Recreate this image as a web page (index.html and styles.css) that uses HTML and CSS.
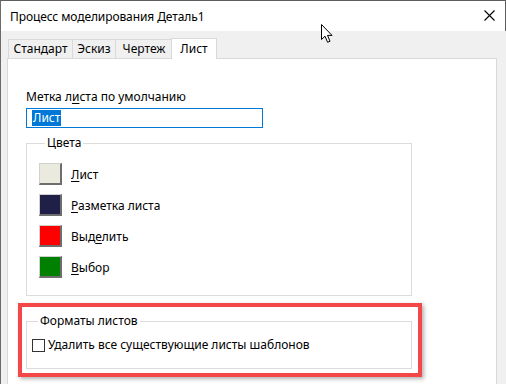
FILE: index.html
```html
<!DOCTYPE html>
<html lang="ru">
<head>
    <meta charset="UTF-8">
    <title>Процесс моделирования Деталь1</title>
    <link rel="stylesheet" href="styles.css">
</head>
<body>
    <div class="window">
        <div class="titlebar">
            <span class="title">Процесс моделирования Деталь1</span>
            <svg class="close" width="11" height="11" viewBox="0 0 11 11">
                <path d="M0.5 0.5 L10.5 10.5 M10.5 0.5 L0.5 10.5" stroke="#000" stroke-width="1.1" fill="none"/>
            </svg>
        </div>
        <div class="client">
            <div class="tabs">
                <div class="tab tab-std">Стандарт</div>
                <div class="tab tab-sketch">Эскиз</div>
                <div class="tab tab-draw">Чертеж</div>
                <div class="tab tab-sheet active">Лист</div>
            </div>
            <div class="panel">
                <label class="field-label" for="sheet-name">Метка л<u>и</u>ста по умолчанию</label>
                <div class="text-input" id="sheet-name"><span class="selection">Лист</span></div>

                <fieldset class="group colors">
                    <legend>Цвета</legend>
                    <div class="color-row">
                        <span class="swatch swatch-sheet"></span>
                        <span><u>Л</u>ист</span>
                    </div>
                    <div class="color-row">
                        <span class="swatch swatch-markup"></span>
                        <span><u>Р</u>азметка листа</span>
                    </div>
                    <div class="color-row">
                        <span class="swatch swatch-highlight"></span>
                        <span>Выд<u>е</u>лить</span>
                    </div>
                    <div class="color-row">
                        <span class="swatch swatch-select"></span>
                        <span><u>В</u>ыбор</span>
                    </div>
                </fieldset>

                <div class="highlight">
                    <fieldset class="group formats">
                        <legend>Форматы листов</legend>
                        <label class="check-row">
                            <input type="checkbox" class="check">
                            <span>Удалить все существующие листы шаблонов</span>
                        </label>
                    </fieldset>
                </div>
            </div>
        </div>
        <svg class="cursor" width="14" height="21" viewBox="0 0 14 21">
            <path d="M0.5 0.5 L0.5 15.5 L4 12.2 L6.6 18.3 L9 17.3 L6.5 11.4 L11 11.4 Z" fill="#fff" stroke="#000" stroke-width="1"/>
        </svg>
    </div>
</body>
</html>
```

FILE: styles.css
```css
/* Общие стили */
body {
    margin: 0;
    padding: 0;
    width: 506px;
    height: 384px;
    overflow: hidden;
    font-family: 'Noto Sans', 'DejaVu Sans', sans-serif;
    font-size: 12px;
    color: #000;
    background: #f0f0f0;
}

/* Окно */
.window {
    position: relative;
    height: 384px;
    border-left: 1px solid #6b6b6b;
    border-top: 1px solid #5e5e5e;
    box-sizing: border-box;
    display: flex;
    flex-direction: column;
}

.titlebar {
    height: 30px;
    background: #fff;
    display: flex;
    align-items: center;
    justify-content: space-between;
    padding: 0 10px 0 9px;
    border-right: 1px solid #5e5e5e;
}

.title {
    letter-spacing: -0.1px;
}

.close {
    margin-top: -1px;
}

/* Клиентская область */
.client {
    flex: 1;
    display: flex;
    flex-direction: column;
    padding: 7px 9px 0 6px;
}

.tabs {
    display: flex;
    align-items: flex-end;
    height: 21px;
    margin-bottom: -1px;
    padding-left: 1px;
    position: relative;
    z-index: 1;
}

.tab {
    height: 19px;
    box-sizing: border-box;
    border: 1px solid #d9d9d9;
    border-bottom: none;
    background: #f0f0f0;
    text-align: center;
    line-height: 18px;
    margin-bottom: 1px;
}

.tab + .tab {
    margin-left: -1px;
}

.tab-std { width: 65px; }
.tab-sketch { width: 44px; }
.tab-draw { width: 58px; }

.tab.active {
    width: 46px;
    height: 21px;
    margin-left: -2px;
    margin-bottom: 0;
    background: #fff;
    line-height: 19px;
}

.panel {
    flex: 1;
    background: #fff;
    border: 1px solid #d9d9d9;
    border-bottom: none;
    padding: 30px 18px 0 18px;
}

/* Поле ввода */
.field-label {
    display: block;
    line-height: 16px;
}

.field-label u,
.color-row u {
    text-underline-offset: 2px;
}

.text-input {
    width: 237px;
    height: 20px;
    box-sizing: border-box;
    margin-top: 3px;
    border: 1px solid #0078d7;
    padding: 1px 0 0 5px;
    line-height: 16px;
}

.selection {
    display: inline-block;
    background: #0078d7;
    color: #fff;
    padding: 0 1px;
    height: 16px;
}

/* Группы */
.group {
    margin: 0;
    width: 386px;
    box-sizing: border-box;
    border: 1px solid #dcdcdc;
    min-width: 0;
}

.group legend {
    margin-left: 6px;
    padding: 0 2px;
    line-height: 16px;
}

.colors {
    margin-top: 7px;
    padding: 12px 12px 17px 12px;
    display: flex;
    flex-direction: column;
    gap: 9px;
}

.color-row {
    display: flex;
    align-items: center;
    gap: 9px;
    height: 22px;
}

.swatch {
    width: 23px;
    height: 22px;
    box-sizing: border-box;
    border-style: solid;
    border-width: 1px 2px 2px 1px;
    border-color: #d0d0d0 #6e6e6e #6e6e6e #d0d0d0;
}

.swatch-sheet { background: #ebeadf; }
.swatch-markup { background: #1f1f47; }
.swatch-highlight { background: #ff0000; }
.swatch-select { background: #008000; }

/* Выделение красной рамкой */
.highlight {
    margin: 7px 0 0 -8px;
    width: 404px;
    box-sizing: border-box;
    border: 4px solid #f44848;
    padding: 6px 6px 4px 4px;
    box-shadow: 2px 2px 4px rgba(0, 0, 0, 0.3);
}

.formats {
    height: 56px;
    padding: 8px 5px 0 5px;
}

.check-row {
    display: flex;
    align-items: center;
    gap: 3px;
    line-height: 16px;
}

.check {
    appearance: none;
    width: 13px;
    height: 13px;
    margin: 0;
    border: 1px solid #333;
    background: #fff;
}

/* Курсор мыши */
.cursor {
    position: absolute;
    left: 320px;
    top: 23px;
}
```
